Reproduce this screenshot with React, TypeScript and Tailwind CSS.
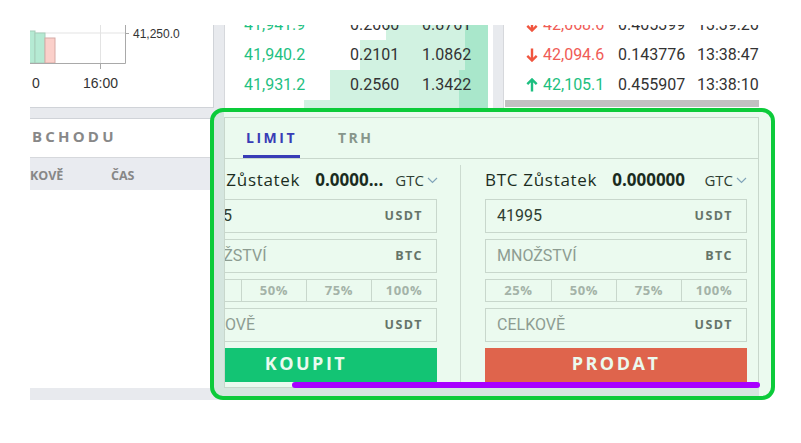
import type { ReactNode } from "react";

const sans = "font-['Open_Sans',sans-serif]";
const roboto = "font-['Roboto',sans-serif]";

// ----------------------------- data -----------------------------
const bids = [
  { price: "41,941.9", amount: "0.2060", total: "0.8761", light: 102, dark: 23 },
  { price: "41,940.2", amount: "0.2101", total: "1.0862", light: 128, dark: 23 },
  { price: "41,931.2", amount: "0.2560", total: "1.3422", light: 158, dark: 29 },
  { price: "41,930.0", amount: "0.1840", total: "1.5262", light: 184, dark: 29 },
];

const trades = [
  { price: "42,068.6", amount: "0.405399", time: "13:39:26", up: false },
  { price: "42,094.6", amount: "0.143776", time: "13:38:47", up: false },
  { price: "42,105.1", amount: "0.455907", time: "13:38:10", up: true },
];

// ----------------------------- icons -----------------------------
function Arrow({ up }: { up: boolean }) {
  return (
    <svg width="12" height="14" viewBox="0 0 12 14" className={up ? "text-[#1dbf80]" : "text-[#f0553f]"}>
      {up ? (
        <path d="M6 13.5V1.5 M1.3 6.2L6 1.5L10.7 6.2" stroke="currentColor" strokeWidth="2.4" fill="none" />
      ) : (
        <path d="M6 0.5V12.5 M1.3 7.8L6 12.5L10.7 7.8" stroke="currentColor" strokeWidth="2.4" fill="none" />
      )}
    </svg>
  );
}

function Chevron() {
  return (
    <svg width="11" height="7" viewBox="0 0 11 7" className="ml-[3px]">
      <path d="M1 1L5.5 5.5L10 1" stroke="#8da2c6" strokeWidth="1.2" fill="none" />
    </svg>
  );
}

// ----------------------------- chart -----------------------------
function MiniChart() {
  return (
    <svg width="183" height="82" viewBox="0 0 183 82" className="block">
      <line x1="0" y1="8" x2="95" y2="8" stroke="#e3e3e3" />
      <line x1="70.5" y1="0" x2="70.5" y2="38" stroke="#e3e3e3" />
      <rect x="-3" y="6" width="8" height="32" fill="#b5ead3" stroke="#a6cdb9" />
      <rect x="5" y="8" width="10" height="30" fill="#b5ead3" stroke="#a6cdb9" />
      <rect x="15" y="13" width="10" height="25" fill="#fbd0ca" stroke="#d6aaa5" />
      <line x1="0" y1="38.5" x2="95.5" y2="38.5" stroke="#a9a9a9" />
      <line x1="95.5" y1="0" x2="95.5" y2="38.5" stroke="#a9a9a9" />
      <line x1="70.5" y1="38" x2="70.5" y2="44" stroke="#a9a9a9" />
      <line x1="95" y1="8.5" x2="99" y2="8.5" stroke="#a9a9a9" />
      <text x="103" y="12.5" fontSize="12" fill="#333" fontFamily="Liberation Sans, Arial, sans-serif">
        41,250.0
      </text>
      <text x="2" y="63" fontSize="14" fill="#333" fontFamily="Liberation Sans, Arial, sans-serif">
        0
      </text>
      <text x="53" y="63" fontSize="14" fill="#333" fontFamily="Liberation Sans, Arial, sans-serif">
        16:00
      </text>
    </svg>
  );
}

// ----------------------------- form pieces -----------------------------
function Field({ value, placeholder, unit }: { value?: string; placeholder?: string; unit: string }) {
  return (
    <div className="mt-[6px] h-[34px] flex items-center justify-between border border-[#d9d9d9] bg-white pl-[11px] pr-[13px]">
      <span className={`${roboto} text-[16px] ${value ? "text-[#333]" : "text-[#9a9a9a]"}`}>{value ?? placeholder}</span>
      <span className={`${sans} text-[12.5px] font-bold tracking-[1.4px] text-[#6e6e6e]`}>{unit}</span>
    </div>
  );
}

function OrderColumn({ coin, balance, action, color }: { coin: string; balance: string; action: string; color: string }) {
  return (
    <div className="w-[262px] shrink-0 pt-[3px] flex flex-col">
      <div className={`${sans} h-[24px] flex items-center text-[#1e1e1e]`}>
        <span className="text-[17px] tracking-[0.7px] whitespace-nowrap">{coin} Zůstatek</span>
        <span className="ml-[15px] text-[17px] font-bold whitespace-nowrap">{balance}</span>
        <span className="ml-auto pl-[12px] flex items-center shrink-0">
          <span className="text-[15px] text-[#333]">GTC</span>
          <Chevron />
        </span>
      </div>
      <div className="mt-[1px]" />
      <Field value="41995" unit="USDT" />
      <Field placeholder="MNOŽSTVÍ" unit="BTC" />
      <div className="mt-[6px] h-[23px] grid grid-cols-4 border border-[#d9d9d9] bg-white">
        {["25%", "50%", "75%", "100%"].map((p, i) => (
          <div
            key={p}
            className={`${sans} flex items-center justify-center text-[13px] font-bold tracking-[0.6px] text-[#b2b2b2] ${i > 0 ? "border-l border-[#d9d9d9]" : ""}`}
          >
            {p}
          </div>
        ))}
      </div>
      <Field placeholder="CELKOVĚ" unit="USDT" />
      <button
        type="button"
        className={`${sans} mt-[6px] h-[34px] pb-[3px] flex items-center justify-center text-[18px] font-bold tracking-[2.5px] text-white ${color}`}
      >
        {action}
      </button>
    </div>
  );
}

function Panel({ className, children }: { className: string; children?: ReactNode }) {
  return <div className={`bg-white ${className}`}>{children}</div>;
}

// ----------------------------- page -----------------------------
export default function App() {
  return (
    <div className="relative w-[801px] h-[443px] bg-white overflow-hidden pl-[30px] pt-[25px]">
      <div className="w-[729px] h-[375px] overflow-hidden bg-[#e8eaee] flex gap-[10px]">
        {/* left column: chart + trade history */}
        <div className="w-[184px] shrink-0 flex flex-col">
          <Panel className="h-[83px] border-r border-b border-[#d0d3d8] overflow-hidden">
            <MiniChart />
          </Panel>
          <Panel className="mt-[10px] h-[270px] border-t border-r border-[#d0d3d8] flex flex-col">
            <div className="h-[39px] pb-[4px] border-b border-[#d6d8dc] flex items-center">
              <span className={`${sans} ml-[2px] text-[15px] font-bold tracking-[3.2px] text-[#888]`}>BCHODU</span>
            </div>
            <div className={`${sans} h-[32px] pt-[4px] bg-[#e9ebf0] flex items-center text-[12.5px] font-bold text-[#878787]`}>
              <span className="w-[81px]">KOVĚ</span>
              <span>ČAS</span>
            </div>
          </Panel>
        </div>

        {/* right column */}
        <div className="flex-1 flex flex-col">
          <div className="h-[83px] flex gap-[10px]">
            {/* order book */}
            <Panel className="w-[269px] shrink-0 border-l border-[#d6d8dc] overflow-hidden">
              <div className="-mt-[15px]">
                {bids.map((b) => (
                  <div key={b.price} className={`${roboto} relative h-[30px] flex items-center pl-[19px] text-[16px]`}>
                    <div className="absolute top-0 bottom-0 right-[5px] bg-[#d1f2e1]" style={{ width: b.light }} />
                    <div className="absolute top-0 bottom-0 right-[5px] bg-[#a9e7cb]" style={{ width: b.dark }} />
                    <span className="relative w-[106px] text-[#1fbf82]">{b.price}</span>
                    <span className="relative w-[72px] text-[#333]">{b.amount}</span>
                    <span className="relative text-[#333]">{b.total}</span>
                  </div>
                ))}
              </div>
            </Panel>
            {/* trades */}
            <Panel className="flex-1 border-l border-[#d6d8dc] overflow-hidden flex flex-col">
              <div className="-mt-[15px]">
                {trades.map((t) => (
                  <div key={t.time} className={`${roboto} h-[30px] flex items-center pl-[22px] text-[16px] whitespace-nowrap`}>
                    <span className="w-[17px] flex items-center">
                      <Arrow up={t.up} />
                    </span>
                    <span className={`w-[75px] ${t.up ? "text-[#1dbf80]" : "text-[#f05b55]"}`}>{t.price}</span>
                    <span className="w-[79px] text-[#333]">{t.amount}</span>
                    <span className="text-[#333]">{t.time}</span>
                  </div>
                ))}
              </div>
              <div className="mt-auto mb-[1px] ml-[1px] h-[7px] bg-[#c1c1c1]" />
            </Panel>
          </div>

          {/* order form */}
          <div className="bg-white pt-[9px]">
            <div className="h-[271px] border border-[#d9d9d9] bg-white flex flex-col overflow-hidden">
              <div className="h-[41px] shrink-0 border-b border-[#d9d9d9] flex pl-[18px]">
                <div className={`${sans} px-[3px] pt-[2px] flex items-center border-b-[3px] border-[#3d31c2] text-[14px] font-bold tracking-[2.5px] text-[#3d31c2]`}>
                  LIMIT
                </div>
                <div className={`${sans} ml-[35px] px-[3px] pt-[2px] flex items-center border-b-[3px] border-transparent text-[14px] font-bold tracking-[2.5px] text-[#939393]`}>
                  TRH
                </div>
              </div>
              <div className="flex-1 flex pt-[6px] -ml-[50px]">
                <OrderColumn coin="USDT" balance="0.0000..." action="KOUPIT" color="bg-[#15c57a]" />
                <div className="ml-[23px] w-px bg-[#dedede] self-stretch" />
                <div className="ml-[24px]">
                  <OrderColumn coin="BTC" balance="0.000000" action="PRODAT" color="bg-[#f25d4f]" />
                </div>
              </div>
            </div>
          </div>
        </div>
      </div>

      {/* highlight overlay */}
      <div className="absolute left-[210px] top-[108px] w-[565px] h-[292px] border-4 border-[#0ccb3a] rounded-[13px] bg-[#00be3214] pointer-events-none" />
      <div className="absolute left-[292px] top-[382px] w-[468px] h-[6px] rounded-full bg-[#a800ff]" />
    </div>
  );
}
